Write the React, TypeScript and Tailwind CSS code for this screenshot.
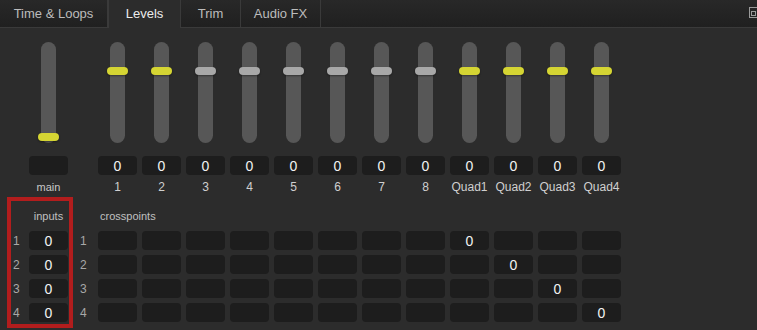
import React from "react";

const tabs = ["Time & Loops", "Levels", "Trim", "Audio FX"];
const tabWidths = ["w-[108px]", "w-[73px]", "w-[60px]", "w-[80px]"];

type Channel = { label: string; knob: "yellow" | "gray" };

const channels: Channel[] = [
  { label: "1", knob: "yellow" },
  { label: "2", knob: "yellow" },
  { label: "3", knob: "gray" },
  { label: "4", knob: "gray" },
  { label: "5", knob: "gray" },
  { label: "6", knob: "gray" },
  { label: "7", knob: "gray" },
  { label: "8", knob: "gray" },
  { label: "Quad1", knob: "yellow" },
  { label: "Quad2", knob: "yellow" },
  { label: "Quad3", knob: "yellow" },
  { label: "Quad4", knob: "yellow" },
];

function Fader({ knobTop, yellow }: { knobTop: string; yellow: boolean }) {
  return (
    <div className="relative h-[101px] w-[39px] flex justify-center">
      <div className="w-[15px] h-full rounded-full bg-[#575757]" />
      <div
        className={`absolute left-[9px] w-[21px] h-[8px] rounded-full shadow-[0_1px_2px_rgba(0,0,0,0.4)] ${knobTop} ${
          yellow ? "bg-[#d5d533]" : "bg-[#a8a8a8]"
        }`}
      />
    </div>
  );
}

function Box({ value }: { value?: string }) {
  return (
    <div className="w-[39px] h-[19px] rounded-[4px] bg-[#1d1d1d] flex items-center justify-center text-[14px] text-[#f2f2f2] leading-none">
      {value}
    </div>
  );
}

export default function App() {
  return (
    <div
      className="relative w-[757px] h-[330px] overflow-hidden bg-[#2c2c2c]"
      style={{ fontFamily: '"Liberation Sans", Arial, sans-serif' }}
    >
      {/* Tab bar */}
      <div className="flex h-[28px] bg-gradient-to-b from-[#282828] to-[#202020] border-b border-[#3a3a3a]">
        {tabs.map((t, i) => (
          <div
            key={t}
            className={`${tabWidths[i]} flex items-center justify-center text-[13px] border-r border-[#3a3a3a] ${
              t === "Levels"
                ? "bg-[#2c2c2c] text-[#ebebeb] -mb-px border-l"
                : "text-[#bcbcbc]"
            }`}
          >
            {t}
          </div>
        ))}
        <div className="flex-1" />
        <svg width="8" height="12" viewBox="0 0 8 12" className="mt-[7px]" fill="none" stroke="#9a9a9a" strokeWidth="1">
          <rect x="0.5" y="0.5" width="9" height="10" />
          <rect x="2.5" y="4.5" width="4" height="4" />
        </svg>
      </div>

      {/* Faders */}
      <div className="flex pl-[29px] pt-[14px]">
        <div className="flex flex-col items-center">
          <Fader knobTop="top-[91px]" yellow />
          <div className="mt-[13px]">
            <Box />
          </div>
          <div className="mt-[6px] text-[11px] text-[#c8c8c8] leading-[13px]">main</div>
        </div>
        <div className="flex gap-[5px] ml-[30px]">
          {channels.map((c) => (
            <div key={c.label} className="flex flex-col items-center">
              <Fader knobTop="top-[25px]" yellow={c.knob === "yellow"} />
              <div className="mt-[13px]">
                <Box value="0" />
              </div>
              <div className="mt-[6px] text-[12px] text-[#d0d0d0] leading-[13px]">{c.label}</div>
            </div>
          ))}
        </div>
      </div>

      {/* Inputs / crosspoints */}
      <div className="flex flex-col pt-[16px]">
        <div className="flex text-[11px] text-[#c0c0c0] leading-[13px] h-[13px]">
          <div className="ml-[29px] w-[39px] text-center">inputs</div>
          <div className="ml-[32px]">crosspoints</div>
        </div>
        <div className="flex flex-col gap-[5px] mt-[8px]">
          {[1, 2, 3, 4].map((r) => (
            <div key={r} className="flex items-center">
              <div className="w-[29px] pl-[13px] text-[12px] text-[#a8a8a8]">{r}</div>
              <Box value="0" />
              <div className="w-[30px] pl-[12px] text-[12px] text-[#a8a8a8]">{r}</div>
              <div className="flex gap-[5px]">
                {channels.map((c, i) => (
                  <Box key={c.label} value={i === 7 + r ? "0" : undefined} />
                ))}
              </div>
            </div>
          ))}
        </div>
      </div>

      {/* annotation */}
      <div className="absolute left-[7px] top-[197px] w-[66px] h-[131px] border-4 border-[#b21d1d]" />
    </div>
  );
}
